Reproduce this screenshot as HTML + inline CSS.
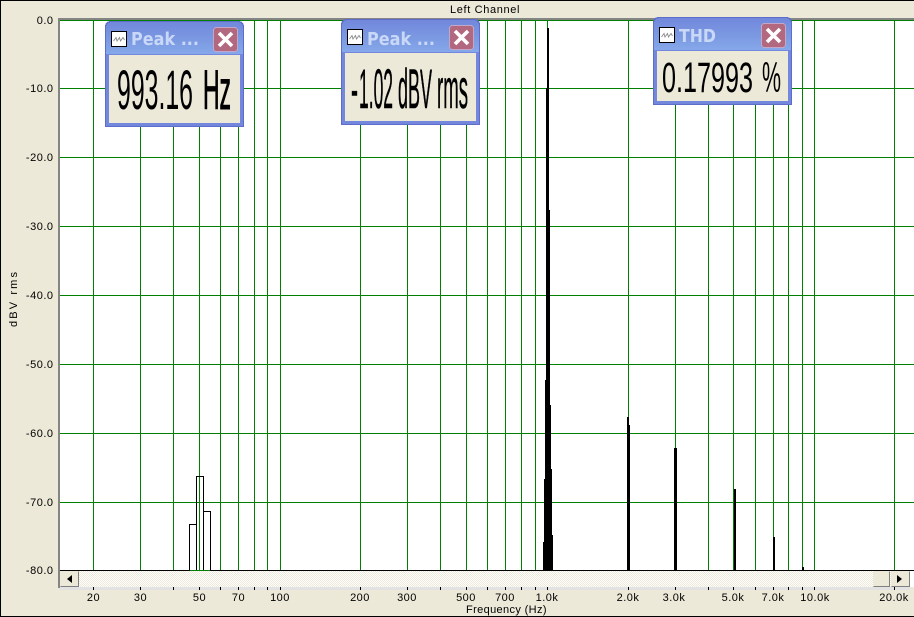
<!DOCTYPE html>
<html><head><meta charset="utf-8"><style>
html,body{margin:0;padding:0;width:914px;height:617px;overflow:hidden;background:#ece9d8}
svg{display:block}
text{font-family:"Liberation Sans",Arial,sans-serif;fill:#000}
.l{font-size:11px;letter-spacing:.5px}
.t{font-size:18px;font-weight:bold;fill:#c9d8f7;font-family:"DejaVu Sans","Liberation Sans",sans-serif}
</style></head><body>
<svg width="914" height="617" viewBox="0 0 914 617" xmlns="http://www.w3.org/2000/svg" shape-rendering="crispEdges">
<defs>
<pattern id="ck" width="2" height="2" patternUnits="userSpaceOnUse"><rect width="2" height="2" fill="#fff"/><rect width="1" height="1" fill="#ece9d8"/><rect x="1" y="1" width="1" height="1" fill="#ece9d8"/></pattern>
<linearGradient id="tb" x1="0" y1="0" x2="0" y2="1"><stop offset="0" stop-color="#7288dc"/><stop offset=".6" stop-color="#7c9ae2"/><stop offset="1" stop-color="#86a8ea"/></linearGradient>
<g id="ic"><rect x=".5" y=".5" width="15" height="15" fill="#fff" stroke="#000"/><path d="M2.5 10 5 6.5 6 10 8.5 6.5 9.5 10 12 6.5 13.5 9" fill="none" stroke="#8a8a8a" stroke-width=".9" shape-rendering="auto"/></g>
<g id="cl"><rect x=".5" y=".5" width="24" height="24" rx="3" fill="#b2697f" stroke="#c3a6c8"/><path d="M6 6 19 19M19 6 6 19" stroke="#fff" stroke-width="3.6" fill="none" shape-rendering="auto"/></g>
</defs>
<rect width="914" height="617" fill="#ece9d8"/>
<rect x="0" y="0" width="914" height="1" fill="#000"/>
<rect x="0" y="0" width="1" height="617" fill="#000"/>
<rect x="0" y="616" width="914" height="1" fill="#000"/>
<rect x="58" y="18" width="856" height="2" fill="#858585"/>
<rect x="58" y="18" width="2" height="570" fill="#858585"/>
<rect x="60" y="20" width="854" height="550" fill="#fff"/>
<!-- grid -->
<path stroke="#008000" stroke-width="1" fill="none" d="M60 20.5H914M60 88.5H914M60 157.5H914M60 226.5H914M60 295.5H914M60 364.5H914M60 433.5H914M60 502.5H914
M93.5 20V570M140.5 20V570M173.5 20V570M199.5 20V570M220.5 20V570M238.5 20V570M254.5 20V570M267.5 20V570M280.5 20V570M360.5 20V570M407.5 20V570M440.5 20V570M466.5 20V570M487.5 20V570M505.5 20V570M521.5 20V570M535.5 20V570M547.5 20V570M628.5 20V570M675.5 20V570M708.5 20V570M733.5 20V570M755.5 20V570M773.5 20V570M788.5 20V570M802.5 20V570M814.5 20V570M894.5 20V570"/>
<!-- plot bottom -->
<rect x="60" y="570" width="854" height="1" fill="#000"/>
<rect x="190" y="570" width="20" height="1" fill="#008000"/>
<!-- low freq bars -->
<path fill="none" stroke="#000" d="M189.5 570V524.5H196.5M196.5 570V476.5H203.5V570M203.5 511.5H210.5V570"/>
<!-- main peak -->
<g fill="#000">
<rect x="547" y="28" width="2" height="60"/>
<rect x="546" y="88" width="3" height="122"/>
<rect x="546" y="210" width="4" height="170"/>
<rect x="545" y="380" width="5" height="25"/>
<rect x="545" y="405" width="6" height="64"/>
<rect x="545" y="469" width="7" height="10"/>
<rect x="544" y="479" width="8" height="56"/>
<rect x="544" y="535" width="9" height="7"/>
<rect x="543" y="542" width="10" height="29"/>
<rect x="627" y="417" width="2" height="8"/>
<rect x="627" y="425" width="3" height="146"/>
<rect x="674" y="448" width="3" height="123"/>
<rect x="734" y="489" width="2" height="82"/>
<rect x="773" y="537" width="2" height="34"/>
<rect x="802" y="567" width="2" height="4"/>
</g>
<!-- scrollbar -->
<rect x="60" y="571" width="850" height="16" fill="url(#ck)"/>
<rect x="910" y="571" width="4" height="16" fill="#fff"/>
<rect x="60" y="587" width="850" height="3" fill="#e2e2e2"/>
<g>
<rect x="60" y="571" width="19" height="16" fill="#ece9d8"/>
<path d="M60.5 586.5H78.5V571.5" fill="none" stroke="#808080"/>
<path d="M72 575V583L67 579Z" fill="#000" shape-rendering="auto"/>
<rect x="873" y="571" width="17" height="16" fill="#ece9d8"/>
<path d="M873.5 586.5H889.5V571.5" fill="none" stroke="#808080"/>
<rect x="891" y="571" width="19" height="16" fill="#ece9d8"/>
<path d="M891.5 586.5H909.5V571.5" fill="none" stroke="#808080"/>
<path d="M897 575V583L902 579Z" fill="#000" shape-rendering="auto"/>
</g>
<!-- ticks -->
<path stroke="#000" fill="none" d="M93.5 587V590M140.5 587V590M173.5 587V590M199.5 587V590M220.5 587V590M238.5 587V590M254.5 587V590M267.5 587V590M280.5 587V590M360.5 587V590M407.5 587V590M440.5 587V590M466.5 587V590M487.5 587V590M505.5 587V590M521.5 587V590M535.5 587V590M547.5 587V590M628.5 587V590M675.5 587V590M708.5 587V590M733.5 587V590M755.5 587V590M773.5 587V590M788.5 587V590M802.5 587V590M814.5 587V590M894.5 587V590"/>
<g shape-rendering="auto">
<text class="l" x="450" y="13" textLength="70">Left Channel</text>
<g class="l" text-anchor="end">
<text x="53.5" y="24">0.0</text><text x="53.5" y="92">-10.0</text><text x="53.5" y="161">-20.0</text><text x="53.5" y="230">-30.0</text><text x="53.5" y="299">-40.0</text><text x="53.5" y="368">-50.0</text><text x="53.5" y="437">-60.0</text><text x="53.5" y="506">-70.0</text><text x="53.5" y="574">-80.0</text>
</g>
<text class="l" style="letter-spacing:0" transform="translate(17,327) rotate(-90)" textLength="55">dBV rms</text>
<g class="l" text-anchor="middle">
<text x="93.5" y="601">20</text><text x="140.5" y="601">30</text><text x="199.5" y="601">50</text><text x="238.5" y="601">70</text><text x="280" y="601">100</text><text x="360" y="601">200</text><text x="407" y="601">300</text><text x="466" y="601">500</text><text x="505" y="601">700</text><text x="547" y="601">1.0k</text><text x="628" y="601">2.0k</text><text x="674" y="601">3.0k</text><text x="733" y="601">5.0k</text><text x="773" y="601">7.0k</text><text x="815" y="601">10.0k</text><text x="894" y="601">20.0k</text>
</g>
<text class="l" x="466" y="613" textLength="81">Frequency (Hz)</text>
</g>
<!-- window 1 -->
<g>
<path d="M105 127V27Q105 21 111 21H238Q244 21 244 27V127Z" fill="#5d6dc9"/>
<path d="M106 126V28Q106 22 112 22H237Q243 22 243 28V126Z" fill="#7387dc"/>
<path d="M106 54V28Q106 22 112 22H237Q243 22 243 28V54Z" fill="url(#tb)"/>
<rect x="109" y="55" width="131" height="68" fill="#ece9d8"/>
<use href="#ic" x="111" y="31"/><use href="#cl" x="213" y="27"/>
<g shape-rendering="auto">
<text class="t" x="131" y="45" textLength="68" lengthAdjust="spacingAndGlyphs">Peak ...</text>
<text x="117" y="109" font-size="56" textLength="76" lengthAdjust="spacingAndGlyphs">993.16</text>
<text x="203" y="109" font-size="56" stroke="#000" stroke-width="1" textLength="28" lengthAdjust="spacingAndGlyphs">Hz</text>
</g>
</g>
<!-- window 2 -->
<g>
<path d="M341 125V25Q341 19 347 19H474Q480 19 480 25V125Z" fill="#5d6dc9"/>
<path d="M342 124V26Q342 20 348 20H473Q479 20 479 26V124Z" fill="#7387dc"/>
<path d="M342 52V26Q342 20 348 20H473Q479 20 479 26V52Z" fill="url(#tb)"/>
<rect x="345" y="53" width="131" height="68" fill="#ece9d8"/>
<use href="#ic" x="347" y="29"/><use href="#cl" x="449" y="25"/>
<g shape-rendering="auto">
<text class="t" x="367" y="45" textLength="68" lengthAdjust="spacingAndGlyphs">Peak ...</text>
<g font-size="56" stroke="#000" stroke-width=".5">
<text x="351" y="108" textLength="7" lengthAdjust="spacingAndGlyphs">-</text>
<text x="359" y="108" textLength="34" lengthAdjust="spacingAndGlyphs">1.02</text>
<text x="398" y="108" textLength="34" lengthAdjust="spacingAndGlyphs">dBV</text>
<text x="437" y="108" textLength="31" lengthAdjust="spacingAndGlyphs">rms</text>
</g>
</g>
</g>
<!-- window 3 -->
<g>
<path d="M653 105V23Q653 17 659 17H786Q792 17 792 23V105Z" fill="#5d6dc9"/>
<path d="M654 104V24Q654 18 660 18H785Q791 18 791 24V104Z" fill="#7387dc"/>
<path d="M654 50V24Q654 18 660 18H785Q791 18 791 24V50Z" fill="url(#tb)"/>
<rect x="657" y="51" width="131" height="50" fill="#ece9d8"/>
<use href="#ic" x="659" y="27"/><use href="#cl" x="761" y="23"/>
<g shape-rendering="auto">
<text class="t" x="679" y="42" textLength="37" lengthAdjust="spacingAndGlyphs">THD</text>
<text x="662" y="92" font-size="43" textLength="91" lengthAdjust="spacingAndGlyphs">0.17993</text>
<text x="762" y="92" font-size="43" textLength="19" lengthAdjust="spacingAndGlyphs">%</text>
</g>
</g>
</svg>
</body></html>
